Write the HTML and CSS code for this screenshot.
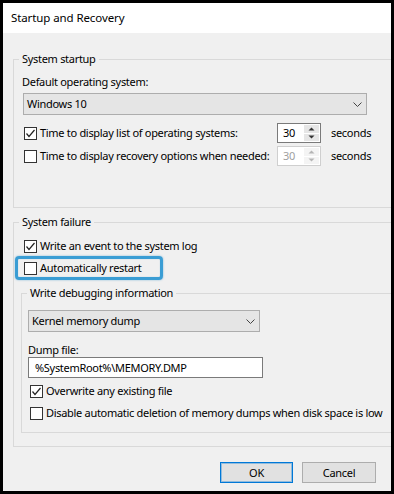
FILE: index.html
```html
<!DOCTYPE html>
<html>
<head>
<meta charset="utf-8">
<link rel="stylesheet" href="styles.css">
</head>
<body>
<div class="window">
  <div class="titlebar">Startup and Recovery</div>
  <div class="body">
    <fieldset class="group startup">
      <legend>System startup</legend>
      <div class="label">Default operating system:</div>
      <div class="select select-os">
        <span>Windows 10</span>
        <svg class="chev" width="9" height="5" viewBox="0 0 9 5"><path d="M0.5 0.5 L4.5 4.5 L8.5 0.5" fill="none" stroke="#444" stroke-width="1"/></svg>
      </div>
      <div class="spin-row first">
        <div class="check-label">
          <span class="checkbox"><svg width="11" height="11" viewBox="0 0 11 11"><path d="M1.5 5.5 L4 8.5 L9.5 2" fill="none" stroke="#222" stroke-width="1.2"/></svg></span>
          <span>Time to display list of operating systems:</span>
        </div>
        <div class="spinner">
          <span class="spin-value">30</span>
          <span class="spin-btns">
            <span class="spin-btn"><svg width="7" height="4" viewBox="0 0 7 4"><path d="M0.5 3.5 L3.5 0.5 L6.5 3.5 Z" fill="#333"/></svg></span>
            <span class="spin-btn"><svg width="7" height="4" viewBox="0 0 7 4"><path d="M0.5 0.5 L3.5 3.5 L6.5 0.5 Z" fill="#333"/></svg></span>
          </span>
        </div>
        <span class="unit">seconds</span>
      </div>
      <div class="spin-row second">
        <div class="check-label">
          <span class="checkbox"></span>
          <span>Time to display recovery options when needed:</span>
        </div>
        <div class="spinner disabled">
          <span class="spin-value">30</span>
          <span class="spin-btns">
            <span class="spin-btn"><svg width="7" height="4" viewBox="0 0 7 4"><path d="M0.5 3.5 L3.5 0.5 L6.5 3.5 Z" fill="#b5b5b5"/></svg></span>
            <span class="spin-btn"><svg width="7" height="4" viewBox="0 0 7 4"><path d="M0.5 0.5 L3.5 3.5 L6.5 0.5 Z" fill="#b5b5b5"/></svg></span>
          </span>
        </div>
        <span class="unit">seconds</span>
      </div>
    </fieldset>

    <fieldset class="group failure">
      <legend>System failure</legend>
      <div class="check-row event">
        <span class="checkbox"><svg width="11" height="11" viewBox="0 0 11 11"><path d="M1.5 5.5 L4 8.5 L9.5 2" fill="none" stroke="#222" stroke-width="1.2"/></svg></span>
        <span>Write an event to the system log</span>
      </div>
      <div class="check-row restart">
        <span class="checkbox"></span>
        <span>Automatically restart</span>
      </div>

      <fieldset class="group debug">
        <legend>Write debugging information</legend>
        <div class="select select-dump">
          <span>Kernel memory dump</span>
          <svg class="chev" width="9" height="5" viewBox="0 0 9 5"><path d="M0.5 0.5 L4.5 4.5 L8.5 0.5" fill="none" stroke="#444" stroke-width="1"/></svg>
        </div>
        <div class="dump-label">Dump file:</div>
        <div class="textbox">%SystemRoot%\MEMORY.DMP</div>
        <div class="check-row overwrite">
          <span class="checkbox"><svg width="11" height="11" viewBox="0 0 11 11"><path d="M1.5 5.5 L4 8.5 L9.5 2" fill="none" stroke="#222" stroke-width="1.2"/></svg></span>
          <span>Overwrite any existing file</span>
        </div>
        <div class="check-row disable">
          <span class="checkbox"></span>
          <span>Disable automatic deletion of memory dumps when disk space is low</span>
        </div>
      </fieldset>
    </fieldset>

    <div class="buttons">
      <div class="btn default">OK</div>
      <div class="btn">Cancel</div>
    </div>
  </div>
</div>
</body>
</html>
```

FILE: styles.css
```css
* { box-sizing: border-box; }
html, body { margin: 0; }
body {
  background: #000;
  padding: 3px;
  width: 394px;
  height: 494px;
  font-family: "Noto Sans", "Open Sans", sans-serif;
  font-size: 11px;
  letter-spacing: -0.3px;
  line-height: 16px;
  color: #000;
}
.window {
  width: 388px;
  height: 488px;
  background: #f0f0f0;
  overflow: hidden;
  display: flex;
  flex-direction: column;
}
.titlebar {
  height: 30px;
  flex: none;
  background: #fff;
  padding-left: 8px;
  display: flex;
  align-items: center;
  font-size: 11.5px;
  letter-spacing: -0.1px;
}
.body {
  padding-left: 10px;
  display: flex;
  flex-direction: column;
}
.group {
  border: 1px solid #d9d9d9;
  margin: 0 -5px 0 0;
  padding: 0 0 0 8px;
  min-width: 0;
  display: flex;
  flex-direction: column;
}
.group > legend {
  padding: 0 3px;
  margin-left: -3px;
  line-height: 16px;
}
.startup {
  margin-top: 18px;
  padding-bottom: 41px;
}
.label { margin-top: 7px; }
.select {
  height: 22px;
  border: 1px solid #adadad;
  background: #e5e5e5;
  display: flex;
  align-items: center;
  justify-content: space-between;
  padding: 0 4px 0 3px;
}
.select-os {
  margin: 3px 0 0 1px;
  width: 344px;
}
.checkbox {
  width: 13px;
  height: 13px;
  flex: none;
  border: 1px solid #333;
  background: #fff;
  display: flex;
}
.spin-row {
  display: flex;
  align-items: center;
  height: 20px;
  padding-left: 2px;
}
.spin-row.first { margin-top: 8px; }
.spin-row.second { margin-top: 3px; }
.check-label {
  display: flex;
  align-items: center;
  gap: 3px;
  width: 253px;
  flex: none;
  white-space: nowrap;
}
.spinner {
  width: 44px;
  height: 20px;
  flex: none;
  border: 1px solid #7a7a7a;
  background: #fff;
  display: flex;
}
.spinner.disabled {
  border-color: #cfcfcf;
  color: #a0a0a0;
}
.spin-value {
  flex: 1;
  padding-left: 5px;
  display: flex;
  align-items: center;
}
.spin-btns {
  width: 15px;
  margin: 1px 1px 1px 0;
  display: flex;
  flex-direction: column;
  gap: 1px;
}
.spin-btn {
  flex: 1;
  background: #e6e6e6;
  display: flex;
  align-items: center;
  justify-content: center;
}
.spinner.disabled .spin-btn { background: #f4f4f4; }
.unit { margin-left: 10px; }

.failure {
  margin-top: 6px;
  padding-bottom: 13px;
}
.check-row {
  display: flex;
  align-items: center;
  gap: 3px;
  height: 16px;
  padding-left: 2px;
  white-space: nowrap;
}
.check-row.event { margin-top: 8px; }
.check-row.restart {
  margin-top: 6px;
  position: relative;
}
.check-row.restart::after {
  content: "";
  position: absolute;
  left: -7px;
  top: -4px;
  bottom: -4px;
  width: 142px;
  border: 3px solid #3a9dd4;
  border-radius: 4px;
  box-shadow: 0 0 2px rgba(40, 140, 200, 0.6), inset 0 0 1px rgba(40, 140, 200, 0.5);
}
.debug {
  margin: 9px -20px 0 -1px;
  padding: 0 0 11px 6px;
}
.debug > legend { margin-left: -1px; }
.select-dump {
  margin-top: 9px;
  width: 232px;
}
.dump-label {
  margin-top: 11px;
  line-height: 14px;
}
.textbox {
  width: 235px;
  height: 21px;
  border: 1px solid #7a7a7a;
  background: #fff;
  padding-left: 6px;
  display: flex;
  align-items: center;
}
.check-row.overwrite { margin-top: 5px; }
.check-row.disable { margin-top: 6px; }

.buttons {
  display: flex;
  justify-content: flex-end;
  gap: 9px;
  margin-top: 15px;
  padding-right: 15px;
}
.btn {
  width: 74px;
  height: 21px;
  border: 1px solid #adadad;
  background: #e1e1e1;
  display: flex;
  align-items: center;
  justify-content: center;
}
.btn.default {
  width: 73px;
  border-color: #0078d7;
  box-shadow: inset 0 0 0 1px rgba(0, 120, 215, 0.35);
}
```
